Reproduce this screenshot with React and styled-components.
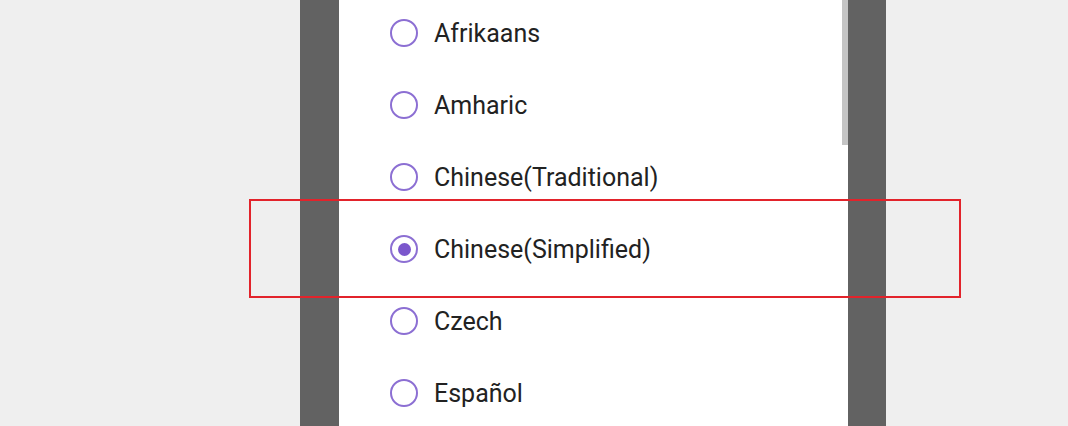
import styled, { createGlobalStyle } from "styled-components"

const GlobalStyle = createGlobalStyle`
    html, body {
        margin: 0;
        padding: 0;
        background: #efefef;
        overflow: hidden;
    }
`

const languages = [
    "Afrikaans",
    "Amharic",
    "Chinese(Traditional)",
    "Chinese(Simplified)",
    "Czech",
    "Español",
]

export default function App() {
    const selected = "Chinese(Simplified)"

    return (
        <>
            <GlobalStyle />
            <Page>
                <Frame>
                    <Sheet>
                        <List>
                            {languages.map((lang) => (
                                <Item key={lang}>
                                    <Radio checked={lang === selected} />
                                    <Label>{lang}</Label>
                                </Item>
                            ))}
                        </List>
                        <Scrollbar />
                    </Sheet>
                </Frame>
                <Highlight />
            </Page>
        </>
    )
}

const Page = styled.div`
    position: relative;
    width: 1068px;
    height: 426px;
    padding-left: 300px;
    box-sizing: border-box;
    background: #efefef;
`

const Frame = styled.div`
    width: 586px;
    height: 426px;
    background: #626262;
    padding: 0 38px 0 39px;
    box-sizing: border-box;
`

const Sheet = styled.div`
    position: relative;
    height: 100%;
    background: #ffffff;
    overflow: hidden;
`

const List = styled.div`
    display: flex;
    flex-direction: column;
    margin-top: -3px;
    padding-left: 51px;
`

const Item = styled.div`
    display: flex;
    align-items: center;
    gap: 16px;
    height: 72px;
`

const Radio = styled.span`
    position: relative;
    width: 28px;
    height: 28px;
    border: 2.5px solid #8c6fd3;
    border-radius: 50%;
    box-sizing: border-box;
    flex-shrink: 0;

    &::after {
        content: "";
        display: ${(p) => (p.checked ? "block" : "none")};
        position: absolute;
        left: 50%;
        top: 50%;
        width: 13px;
        height: 13px;
        margin: -6.5px 0 0 -6.5px;
        border-radius: 50%;
        background: #7b57cc;
    }
`

const Label = styled.span`
    font-family: Roboto, "Noto Sans", sans-serif;
    font-size: 25px;
    color: #222222;
    line-height: 1;
`

const Scrollbar = styled.div`
    position: absolute;
    top: 0;
    right: 0;
    width: 6px;
    height: 145px;
    background: #c4c4c4;
`

const Highlight = styled.div`
    position: absolute;
    left: 249px;
    top: 199px;
    width: 712px;
    height: 99px;
    border: 2px solid #e2232b;
    box-sizing: border-box;
    pointer-events: none;
`
